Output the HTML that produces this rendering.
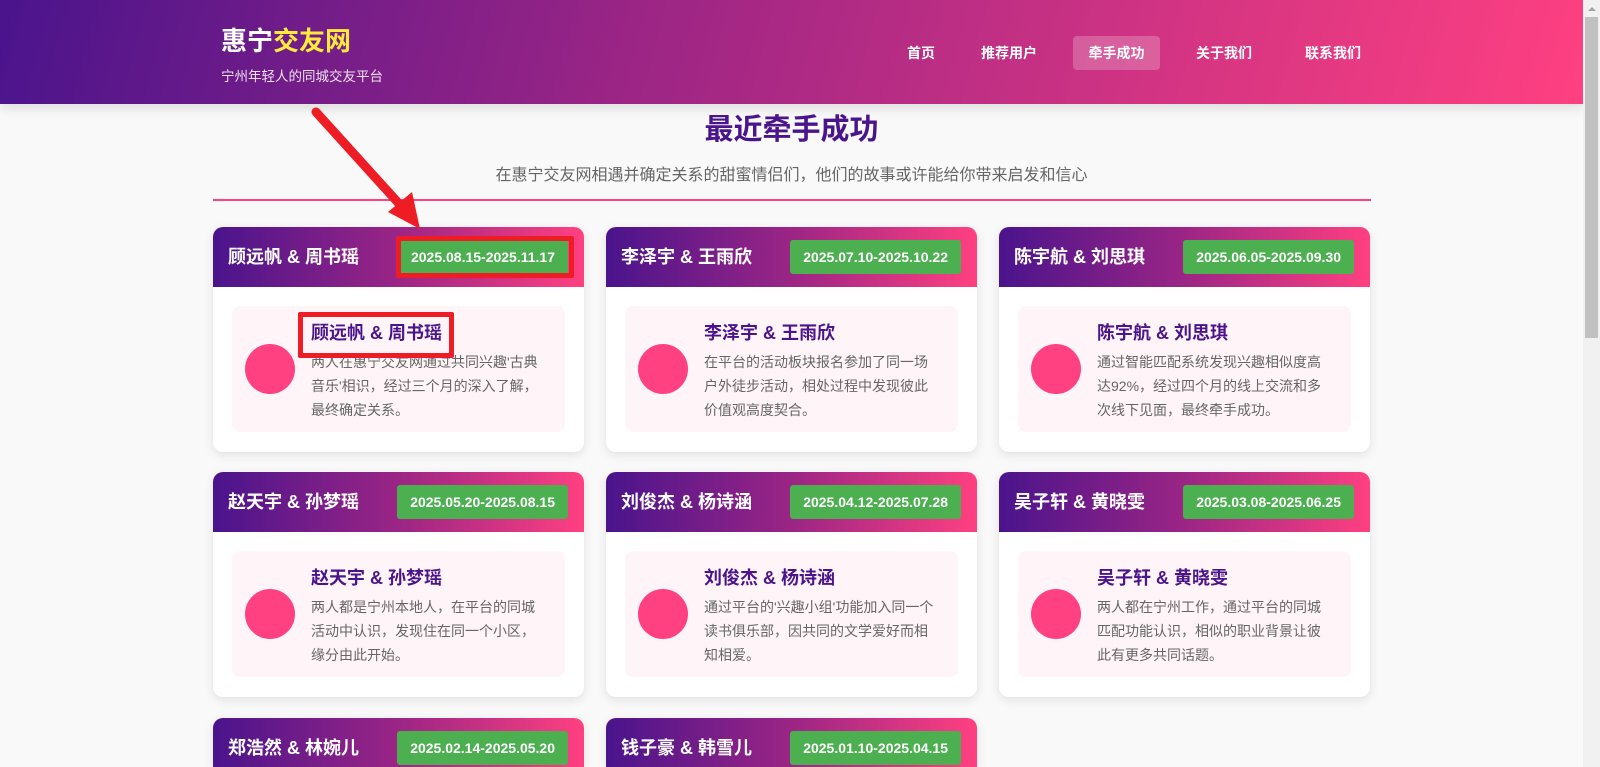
<!DOCTYPE html>
<html><head><meta charset="utf-8"><style>
*{margin:0;padding:0;box-sizing:border-box}
html,body{width:1600px;height:767px;overflow:hidden}
body{background:#f9f9f9;font-family:"Liberation Sans","Noto Sans CJK SC",sans-serif;position:relative}
.hdr{position:absolute;left:0;top:0;width:1583px;height:104px;background:linear-gradient(105deg,#4a148c 0%,#9b2585 40%,#ff4081 100%);box-shadow:0 4px 12px rgba(0,0,0,.12)}
.logo{position:absolute;left:221px;top:25px;font-size:26px;font-weight:bold;color:#fff;line-height:32px}
.logo span{color:#ffeb3b}
.sub{position:absolute;left:221px;top:65px;font-size:13.5px;color:#f0e0f0}
.nav a{position:absolute;top:36px;height:34px;line-height:34px;font-size:14px;font-weight:bold;color:#fff;text-decoration:none;text-align:center;border-radius:4px}
.nav a.on{background:rgba(255,255,255,.22)}
.sb{position:absolute;left:1583px;top:0;width:17px;height:767px;background:#f1f1f1}
.sb div{position:absolute;left:2px;top:17px;width:13px;height:321px;background:#c1c1c1}
.sb i{position:absolute;left:5px;top:7px;border:4px solid transparent;border-bottom:4px solid #a3a3a3;border-top:0}
h1{position:absolute;left:0;width:1583px;top:112px;text-align:center;font-size:29px;color:#4a148c;line-height:36px}
.tag{position:absolute;left:0;width:1583px;top:161px;text-align:center;font-size:16px;color:#666}
.line{position:absolute;left:213px;top:199px;width:1158px;height:2px;background:#ff4081}
.card{position:absolute;width:371px;height:225px;background:#fff;border-radius:10px;box-shadow:0 3px 10px rgba(0,0,0,.1);overflow:hidden}
.ch{height:60px;background:linear-gradient(90deg,#4a148c,#9b2585 50%,#ff4081);position:relative}
.ch b{position:absolute;left:15px;top:0;line-height:60px;font-size:18px;color:#fff}
.ch em{position:absolute;right:16px;top:13px;height:34px;line-height:34px;padding:0 13px;background:#4caf50;color:#fff;font-style:normal;font-weight:bold;font-size:14px;border-radius:3px}
.in{position:absolute;left:19px;top:79px;width:333px;height:126px;background:#fff4f7;border-radius:8px}
.cir{position:absolute;left:13px;top:38px;width:50px;height:50px;border-radius:50%;background:#ff4081}
.in h3{position:absolute;left:79px;top:14px;font-size:18px;color:#4a148c;line-height:26px}
.in p{position:absolute;left:79px;top:44px;width:230px;font-size:14px;color:#666;line-height:24px}
.ann{position:absolute;border:5px solid #ee1c25;border-radius:2px}
</style></head><body>
<div class="hdr">
<div class="logo">惠宁<span>交友网</span></div>
<div class="sub">宁州年轻人的同城交友平台</div>
<div class="nav">
<a style="left:896px;width:50px">首页</a>
<a style="left:971px;width:76px">推荐用户</a>
<a class="on" style="left:1073px;width:87px">牵手成功</a>
<a style="left:1186px;width:76px">关于我们</a>
<a style="left:1295px;width:76px">联系我们</a>
</div></div>
<div class="sb"><i></i><div></div></div>
<h1>最近牵手成功</h1>
<div class="tag">在惠宁交友网相遇并确定关系的甜蜜情侣们，他们的故事或许能给你带来启发和信心</div>
<div class="line"></div>

<div class="card" style="left:213px;top:227px"><div class="ch"><b>顾远帆 &amp; 周书瑶</b><em>2025.08.15-2025.11.17</em></div><div class="in"><div class="cir"></div><h3>顾远帆 &amp; 周书瑶</h3><p>两人在惠宁交友网通过共同兴趣'古典音乐'相识，经过三个月的深入了解，最终确定关系。</p></div></div>
<div class="card" style="left:606px;top:227px"><div class="ch"><b>李泽宇 &amp; 王雨欣</b><em>2025.07.10-2025.10.22</em></div><div class="in"><div class="cir"></div><h3>李泽宇 &amp; 王雨欣</h3><p>在平台的活动板块报名参加了同一场户外徒步活动，相处过程中发现彼此价值观高度契合。</p></div></div>
<div class="card" style="left:999px;top:227px"><div class="ch"><b>陈宇航 &amp; 刘思琪</b><em>2025.06.05-2025.09.30</em></div><div class="in"><div class="cir"></div><h3>陈宇航 &amp; 刘思琪</h3><p>通过智能匹配系统发现兴趣相似度高达92%，经过四个月的线上交流和多次线下见面，最终牵手成功。</p></div></div>

<div class="card" style="left:213px;top:472px"><div class="ch"><b>赵天宇 &amp; 孙梦瑶</b><em>2025.05.20-2025.08.15</em></div><div class="in"><div class="cir"></div><h3>赵天宇 &amp; 孙梦瑶</h3><p>两人都是宁州本地人，在平台的同城活动中认识，发现住在同一个小区，缘分由此开始。</p></div></div>
<div class="card" style="left:606px;top:472px"><div class="ch"><b>刘俊杰 &amp; 杨诗涵</b><em>2025.04.12-2025.07.28</em></div><div class="in"><div class="cir"></div><h3>刘俊杰 &amp; 杨诗涵</h3><p>通过平台的'兴趣小组'功能加入同一个读书俱乐部，因共同的文学爱好而相知相爱。</p></div></div>
<div class="card" style="left:999px;top:472px"><div class="ch"><b>吴子轩 &amp; 黄晓雯</b><em>2025.03.08-2025.06.25</em></div><div class="in"><div class="cir"></div><h3>吴子轩 &amp; 黄晓雯</h3><p>两人都在宁州工作，通过平台的同城匹配功能认识，相似的职业背景让彼此有更多共同话题。</p></div></div>

<div class="card" style="left:213px;top:718px;height:49px;border-radius:10px 10px 0 0"><div class="ch"><b>郑浩然 &amp; 林婉儿</b><em>2025.02.14-2025.05.20</em></div></div>
<div class="card" style="left:606px;top:718px;height:49px;border-radius:10px 10px 0 0"><div class="ch"><b>钱子豪 &amp; 韩雪儿</b><em>2025.01.10-2025.04.15</em></div></div>

<div class="ann" style="left:396px;top:236px;width:178px;height:42px"></div>
<div class="ann" style="left:298px;top:312px;width:156px;height:46px"></div>
<svg style="position:absolute;left:0;top:0" width="1583" height="767">
<line x1="316" y1="112" x2="402" y2="207" stroke="#ee1c25" stroke-width="9" stroke-linecap="round"/>
<polygon points="420,229 388,212 412,192" fill="#ee1c25"/>
<circle cx="28" cy="782" r="14" fill="#dde6ee" stroke="#3a6a9a" stroke-width="1.5"/>
</svg>
</body></html>
